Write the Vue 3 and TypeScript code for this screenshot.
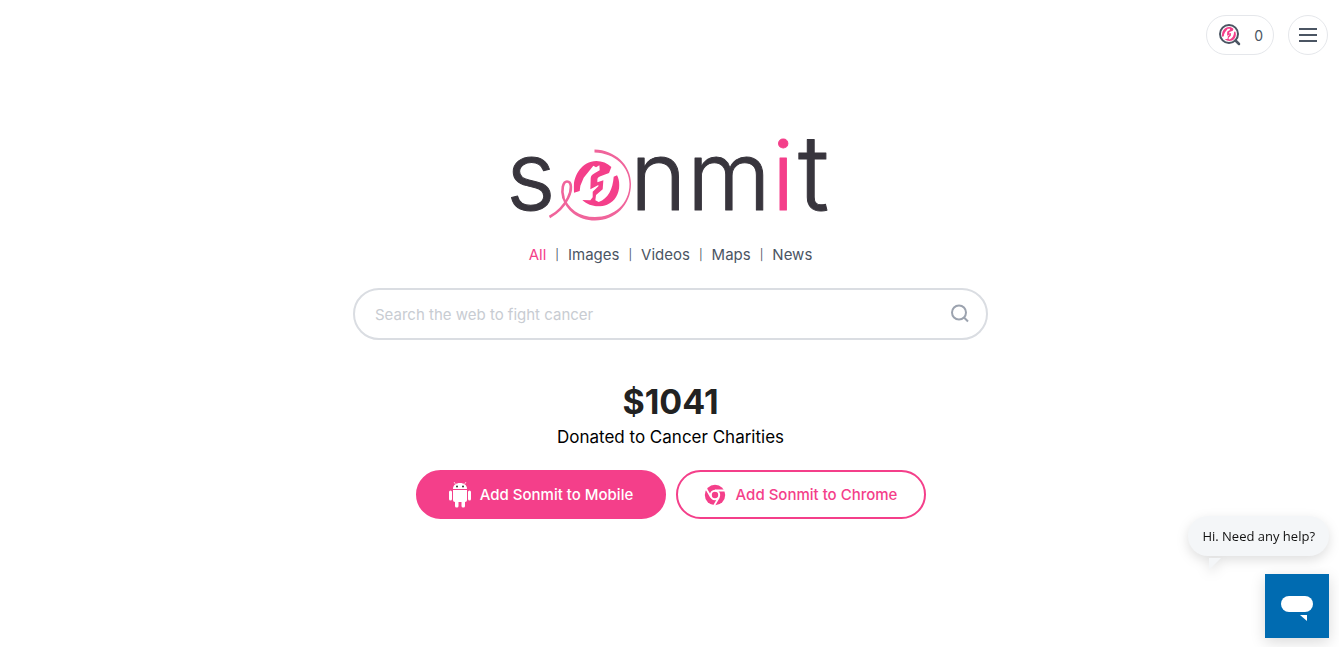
<script setup lang="ts">
import { ref } from 'vue'

const tabs: string[] = ['All', 'Images', 'Videos', 'Maps', 'News']
const active = ref<string>('All')
const query = ref<string>('')
const searches = ref<number>(0)
const donated = ref<number>(1041)
</script>

<template>
  <div class="page">
    <svg class="defs" aria-hidden="true">
      <defs>
        <symbol id="emblem" viewBox="86 47 138 138">
          <path fill="#f43f8a" d="M87 143C80 100 105 50 154 48C171 48 187 54 199 66L192 84L166 94C159 97 157 100 157 104L157 112L175 106L173 133L153 150L151 166L161 171C190 160 203 133 206 95L216 91C232 123 219 166 186 179C159 189 131 183 112 165L136 166L143 157L143 140L160 124L160 120L136 133L137 99C138 91 142 88 151 83L164 76L163 61L153 67L145 62L116 98L106 122L104 138Z" />
        </symbol>
      </defs>
    </svg>

    <header class="top">
      <button class="pill" type="button" aria-label="Search count">
        <svg width="24" height="24" viewBox="0 0 24 24" aria-hidden="true">
          <use href="#emblem" x="4" y="4" width="14" height="14" />
          <circle cx="11" cy="11" r="9" fill="none" stroke="#4b5563" stroke-width="2" />
          <path d="M17.5 17.5L21 21" stroke="#4b5563" stroke-width="2.5" stroke-linecap="round" />
        </svg>
        <span>{{ searches }}</span>
      </button>
      <button class="round" type="button" aria-label="Menu">
        <svg width="20" height="16" viewBox="0 0 20 16" aria-hidden="true">
          <path d="M2 2H18M2 8H18M2 14H18" stroke="#4b5563" stroke-width="2" stroke-linecap="square" />
        </svg>
      </button>
    </header>

    <main class="main">
      <svg class="logo" viewBox="0 0 330 90" role="img" aria-label="sonmit">
        <g class="word">
          <text x="0" y="76">s</text>
          <text x="124" y="76">n</text>
          <text x="181" y="76">m</text>
          <text class="pink" x="266" y="76">i</text>
          <text class="tall" x="292" y="76">t</text>
        </g>
        <use href="#emblem" x="67.700" y="26.700" width="46" height="46" />
        <path fill="#f0649b" d="M88.500 15.500C109 16 125 31 125 50C125 71 109 86.500 89 86.500C72 86.500 60 76 56 63L57.500 61C62 75 73 83 89 83C108 83 123.500 70 123.500 50C123.500 33 109 19 88.500 18.500Z" />
        <path fill="none" stroke="#f0649b" stroke-width="2.600" d="M57.500 64C55 56 57 47.500 61 47.500C66 47.500 66 56 62 64C57 74 51 79 43.500 83" />
      </svg>

      <nav class="tabs" aria-label="Search type">
        <template v-for="(tab, i) in tabs" :key="tab">
          <span v-if="i > 0" class="bar">|</span>
          <a href="#" :class="{ on: tab === active }" @click.prevent="active = tab">{{ tab }}</a>
        </template>
      </nav>

      <form class="search" role="search" @submit.prevent>
        <input v-model="query" type="text" aria-label="Search the web" placeholder="Search the web to fight cancer" />
        <button type="submit" aria-label="Search">
          <svg width="20" height="20" viewBox="0 0 20 20" fill="none" stroke="#9ca3af" stroke-width="2" aria-hidden="true">
            <circle cx="9" cy="8.500" r="7" />
            <path d="M14 13.500L18 17.500" />
          </svg>
        </button>
      </form>

      <p class="amount">${{ donated }}</p>
      <p class="caption">Donated to Cancer Charities</p>

      <div class="actions">
        <button class="cta filled" type="button">
          <svg width="24" height="26" viewBox="0 0 24 26" fill="#fff" aria-hidden="true">
            <path d="M5 7C5 3 8 1 12 1S19 3 19 7Z" />
            <path d="M6 0L8 3M18 0L16 3" stroke="#ffc3dc" stroke-width="1" />
            <path d="M5 8H19V18Q19 20 17 20H7Q5 20 5 18Z" />
            <rect x="1" y="8.500" width="3" height="10" rx="1.500" />
            <rect x="20" y="8.500" width="3" height="10" rx="1.500" />
            <rect x="7" y="18" width="3.500" height="7.500" rx="1.500" />
            <rect x="13.500" y="18" width="3.500" height="7.500" rx="1.500" />
            <circle cx="9" cy="4.500" r="1" fill="#333" />
            <circle cx="15" cy="4.500" r="1" fill="#333" />
          </svg>
          Add Sonmit to Mobile
        </button>
        <button class="cta" type="button">
          <svg width="22" height="22" viewBox="0 0 22 22" aria-hidden="true">
            <circle cx="11" cy="11" r="10.200" fill="#f43f8a" />
            <circle cx="11" cy="11" r="4.200" fill="#f43f8a" stroke="#fff" stroke-width="2" />
            <path fill="none" stroke="#fff" stroke-width="1.800" d="M11 6.500H21M7.100 13.250L2 4.500M14.900 13.250L9.900 22" />
          </svg>
          Add Sonmit to Chrome
        </button>
      </div>
    </main>

    <aside class="help">
      <div class="bubble">Hi. Need any help?</div>
      <button class="chat" type="button" aria-label="Open chat">
        <svg width="34" height="28" viewBox="0 0 34 28" fill="#fff" aria-hidden="true">
          <rect x="1" y="1" width="32" height="16" rx="8" />
          <path d="M20 20H27V26Z" />
        </svg>
      </button>
    </aside>
  </div>
</template>

<style>
body {
  margin: 0;
  background: #fff;
}
</style>

<style scoped>
.page {
  min-height: 100vh;
  font-family: Inter, "Open Sans", sans-serif;
  color: #4b5563;
}
.defs {
  position: absolute;
  width: 0;
  height: 0;
}
button {
  font: inherit;
  color: inherit;
  cursor: pointer;
  padding: 0;
  box-sizing: border-box;
}
.top {
  display: flex;
  justify-content: flex-end;
  gap: 14px;
  padding: 15px 11px 0;
}
.pill,
.round {
  display: flex;
  align-items: center;
  height: 40px;
  border: 1px solid #e5e7eb;
  border-radius: 20px;
  background: #fff;
}
.pill {
  gap: 12px;
  padding: 0 10px 0 11px;
  font-size: 14px;
}
.round {
  width: 40px;
  justify-content: center;
}
.main {
  display: flex;
  flex-direction: column;
  align-items: center;
  padding: 79px 14px 0 16px;
}
.logo {
  width: 330px;
  height: 90px;
  overflow: visible;
}
.word {
  font-family: Inter, sans-serif;
  font-size: 96px;
  font-weight: 300;
  fill: #38353d;
  stroke: #38353d;
  stroke-width: 1px;
  stroke-linejoin: round;
}
.word .pink {
  fill: #f43f8a;
  stroke: #f43f8a;
}
.word .tall {
  font-size: 104px;
}
.tabs {
  display: flex;
  gap: 9px;
  margin-top: 21px;
  font-size: 15px;
  line-height: 20px;
}
.tabs a {
  color: #4b5563;
  text-decoration: none;
}
.tabs a.on {
  color: #f43f8a;
}
.bar {
  font-size: 11px;
}
.search {
  display: flex;
  align-items: center;
  box-sizing: border-box;
  width: 100%;
  max-width: 635px;
  height: 52px;
  margin-top: 23px;
  padding: 0 16px 0 20px;
  border: 2px solid #dadde2;
  border-radius: 26px;
}
.search input {
  flex: 1;
  min-width: 0;
  padding: 0;
  border: 0;
  outline: 0;
  background: none;
  font: inherit;
  font-size: 15px;
  color: #222;
}
.search input::placeholder {
  color: #c8ccd2;
  opacity: 1;
}
.search button {
  display: flex;
  border: 0;
  background: none;
}
.amount {
  margin: 38px 0 0;
  color: #222;
  font-size: 34px;
  line-height: 48px;
  font-weight: 700;
}
.caption {
  margin: 0;
  color: #000;
  font-size: 17px;
  line-height: 22px;
}
.actions {
  display: flex;
  flex-wrap: wrap;
  justify-content: center;
  gap: 10px;
  margin-top: 22px;
}
.cta {
  display: flex;
  align-items: center;
  justify-content: center;
  gap: 10px;
  width: 250px;
  height: 49px;
  border: 2px solid #f43f8a;
  border-radius: 25px;
  background: #fff;
  color: #f43f8a;
  font-size: 15px;
  font-weight: 500;
}
.filled {
  gap: 8px;
  background: #f43f8a;
  color: #fff;
}
.help {
  position: fixed;
  right: 10px;
  bottom: 9px;
  display: flex;
  flex-direction: column;
  align-items: flex-end;
  gap: 18px;
}
.bubble {
  position: relative;
  padding: 10px 14px;
  border-radius: 20px;
  background: #f4f6f8;
  color: #111;
  font-family: "Open Sans", "Noto Sans", sans-serif;
  font-size: 13px;
  line-height: 20px;
  filter: drop-shadow(0 4px 6px rgba(0, 0, 0, 0.13));
}
.bubble::after {
  content: "";
  position: absolute;
  left: 21px;
  top: 42px;
  border-top: 12px solid #f4f6f8;
  border-right: 12px solid transparent;
}
.chat {
  display: flex;
  align-items: center;
  justify-content: center;
  width: 64px;
  height: 64px;
  padding-top: 6px;
  border: 0;
  background: #006bb1;
  box-shadow: 0 4px 14px rgba(0, 0, 0, 0.15);
}
</style>
